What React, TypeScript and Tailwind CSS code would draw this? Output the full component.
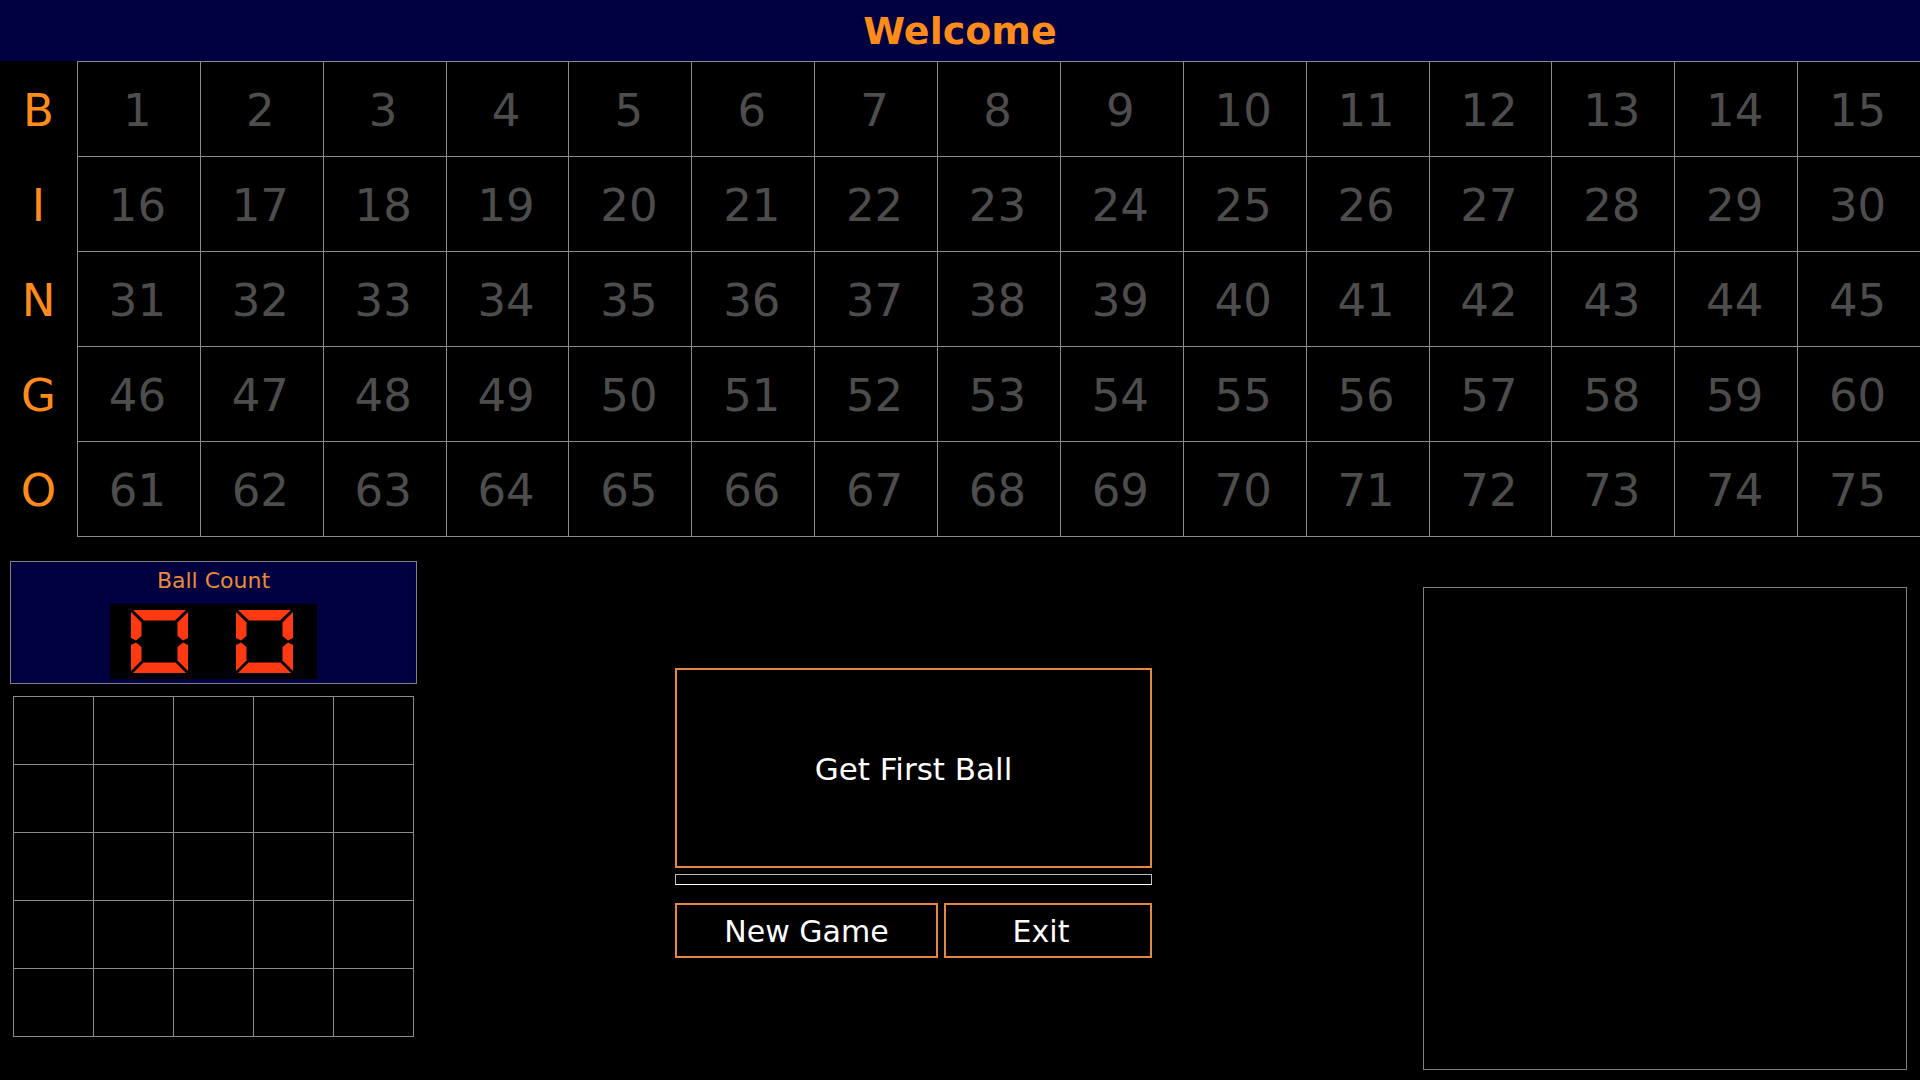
import React from "react";

const letters = ["B", "I", "N", "G", "O"];

const Digit = () => (
  <svg width="57" height="63" viewBox="0 0 57 63">
    <g fill="#ff3a12">
      <path d="M2,0 H55 L44,10.5 H13 Z" />
      <path d="M0,2 L10.5,12.5 V26 L5,30.5 L0,28 Z" />
      <path d="M57,2 L46.5,12.5 V26 L52,30.5 L57,28 Z" />
      <path d="M0,35 L5,32.5 L10.5,37 V50.5 L0,61 Z" />
      <path d="M57,35 L52,32.5 L46.5,37 V50.5 L57,61 Z" />
      <path d="M2,63 H55 L44.5,52.5 H12.5 Z" />
    </g>
  </svg>
);

const BallCount = () => {
  return (
    <div className="h-[123px] w-[407px] border border-[#808080] bg-[#000040] pt-[6px] flex flex-col items-center">
      <p className="text-[22px] leading-[26px] text-[#e98a3a]">Ball Count</p>
      <div className="mt-[10px] flex h-[75px] w-[207px] items-center justify-center gap-[48px] bg-black pr-[4px]">
        <Digit />
        <Digit />
      </div>
    </div>
  );
};

const App = () => {
  return (
    <div className="h-[1080px] w-[1920px] overflow-hidden bg-black font-['DejaVu_Sans',Verdana,sans-serif]">
      <header className="flex h-[61px] items-center justify-center bg-[#000040]">
        <h1 className="text-[38px] font-bold leading-none text-[#ff8c1a]">Welcome</h1>
      </header>

      {/* caller board */}
      <div className="flex">
        <div className="flex w-[77px] flex-col pt-px">
          {letters.map((l) => (
            <div
              key={l}
              className="flex h-[95px] items-center justify-center pt-[3px] text-[45px] text-[#ff8c1a]"
            >
              {l}
            </div>
          ))}
        </div>
        <div className="grid flex-1 grid-cols-15 border-t border-[#8a8a8a]">
          {Array.from({ length: 75 }, (_, i) => (
            <div
              key={i}
              className="flex h-[95px] items-center justify-center border-b border-l border-[#8a8a8a] pt-[4px] pr-[3px] text-[45px] text-[#4d4d4d]"
            >
              {i + 1}
            </div>
          ))}
        </div>
      </div>

      <div className="flex items-start">
        <div className="ml-[10px] mt-[24px] flex w-[407px] flex-col">
          <BallCount />
          <div className="mx-[3px] mt-[12px] grid grid-cols-5 border-l border-t border-[#8a8a8a]">
            {Array.from({ length: 25 }, (_, i) => (
              <div key={i} className="h-[68px] border-b border-r border-[#8a8a8a]" />
            ))}
          </div>
        </div>

        <div className="ml-[258px] mt-[131px] flex w-[477px] flex-col">
          <button className="flex h-[200px] items-center justify-center border-2 border-[#e6873f] pt-[2px] text-[31px] text-white">
            Get First Ball
          </button>
          <div className="mt-[6px] h-[11px] border border-[#bdbdbd] border-b-white" />
          <div className="mt-[18px] flex gap-[6px]">
            <button className="flex h-[55px] w-[263px] items-center justify-center border-2 border-[#e6873f] pt-[2px] text-[30px] text-white">
              New Game
            </button>
            <button className="flex h-[55px] flex-1 items-center justify-center border-2 border-[#e6873f] pt-[2px] pr-[14px] text-[30px] text-white">
              Exit
            </button>
          </div>
        </div>

        <div className="ml-[271px] mt-[50px] h-[483px] w-[484px] border border-[#808080]" />
      </div>
    </div>
  );
};

export default App;
